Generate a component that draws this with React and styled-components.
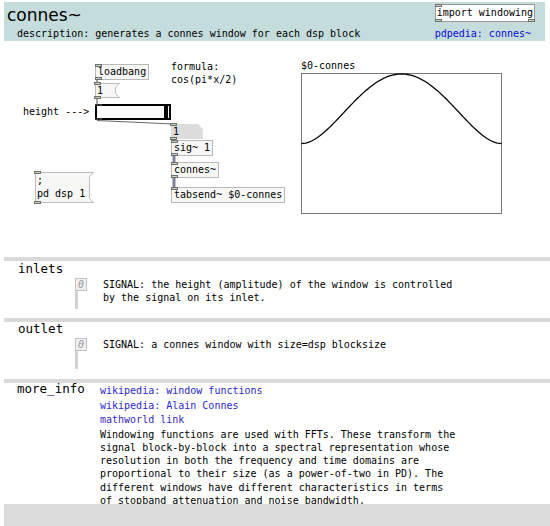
import React from "react";
import styled, { createGlobalStyle } from "styled-components";

const mono = `"DejaVu Sans Mono", "Liberation Mono", monospace`;

const GlobalStyle = createGlobalStyle`
  body {
    margin: 0;
    background: #ffffff;
    font-family: ${mono};
    color: #000;
  }
`;

const Page = styled.div`
  width: 550px;
  height: 526px;
  overflow: hidden;
  padding-top: 2px;
  box-sizing: border-box;
`;

/* ---------- header ---------- */

const Header = styled.header`
  display: flex;
  justify-content: space-between;
  margin: 0 5px 0 4px;
  height: 39px;
  background-color: #c5dcdc;
`;

const HeaderLeft = styled.div`
  display: flex;
  flex-direction: column;
`;

const Title = styled.h1`
  margin: 3px 0 0 3px;
  font-family: "DejaVu Sans", "Liberation Sans", sans-serif;
  font-size: 17px;
  font-weight: normal;
  line-height: 20px;
`;

const Description = styled.div`
  margin: 2px 0 0 13px;
  font-size: 10px;
  line-height: 13px;
`;

const HeaderRight = styled.div`
  display: flex;
  flex-direction: column;
  align-items: flex-start;
  padding: 2px 10px 0 0;
`;

const Link = styled.a`
  font-family: ${mono};
  font-size: 10px;
  line-height: ${(p) => p.$lh || 13}px;
  color: ${(p) => p.$color || "#2a1fd2"};
  text-decoration: none;
`;

const PdLink = styled(Link)`
  margin-top: 5px;
  color: #0b0bd8;
`;

/* ---------- pd boxes ---------- */

const Tab = styled.span`
  position: absolute;
  left: -1px;
  ${(p) => (p.$bottom ? "bottom: -1px;" : "top: -1px;")}
  ${(p) => (p.$right ? "left: auto; right: -1px;" : "")}
  width: 5px;
  height: 1px;
  border: 1px solid #6b7268;
  background: #c8d0c6;
`;

const ObjBox = styled.div`
  position: ${(p) => (p.$inline ? "relative" : "absolute")};
  left: ${(p) => p.$x || 0}px;
  top: ${(p) => p.$y || 0}px;
  height: 14px;
  padding: 0 2px;
  border: 1px solid #b9b9b9;
  background: #f7f7f5;
  font-size: 10px;
  line-height: 14px;
  white-space: nowrap;
`;

const ImportBox = styled(ObjBox)`
  height: 16px;
  padding: 0 1px;
  line-height: 16px;
  background: #ffffff;
  border-color: #9a9a9a;
`;

const MsgBox = styled.div`
  position: absolute;
  left: ${(p) => p.$x}px;
  top: ${(p) => p.$y}px;
  width: ${(p) => p.$w}px;
  height: ${(p) => p.$h}px;
  font-size: 10px;
  line-height: ${(p) => (p.$h > 20 ? 13 : 14)}px;
  white-space: pre;
`;

const MsgText = styled.div`
  position: relative;
  padding: ${(p) => (p.$h > 20 ? "2px" : "1px")} 2px 0;
`;

const NumBox = styled.div`
  position: absolute;
  left: ${(p) => p.$x}px;
  top: ${(p) => p.$y}px;
  width: ${(p) => p.$w}px;
  height: 15px;
  font-size: 10px;
  line-height: 15px;
`;

const NumFill = styled.div`
  position: absolute;
  inset: 0;
  background: #dcdcdc;
  clip-path: polygon(0 0, calc(100% - 5px) 0, 100% 5px, 100% 100%, 0 100%);
`;

const NumText = styled.div`
  position: relative;
  padding-left: 2px;
`;

const Slider = styled.div`
  position: absolute;
  left: ${(p) => p.$x}px;
  top: ${(p) => p.$y}px;
  width: ${(p) => p.$w}px;
  height: 16px;
  box-sizing: border-box;
  border: 2px solid #000;
  background: #fbfbfb;
  display: flex;
  justify-content: flex-end;
`;

const SliderKnob = styled.div`
  width: 4px;
  background: #000;
  margin-right: 1px;
`;

const SliderTab = styled.span`
  position: absolute;
  left: -2px;
  ${(p) => (p.$bottom ? "bottom: -2px;" : "top: -2px;")}
  width: 7px;
  height: 2px;
  background: #333;
`;

const Comment = styled.div`
  position: absolute;
  left: ${(p) => p.$x}px;
  top: ${(p) => p.$y}px;
  font-size: 10px;
  line-height: ${(p) => p.$lh || 14}px;
  white-space: pre;
`;

const Canvas = styled.div`
  position: relative;
  height: 216px;
`;

const Wires = styled.svg`
  position: absolute;
  left: 0;
  top: 0;
  pointer-events: none;
`;

const GraphBox = styled.svg`
  position: absolute;
  left: ${(p) => p.$x}px;
  top: ${(p) => p.$y}px;
`;

/* ---------- sections ---------- */

const SepBar = styled.div`
  height: 4px;
  margin-left: 4px;
  background: #d9d9d9;
`;

const Section = styled.section`
  height: ${(p) => p.$h}px;
  padding-left: ${(p) => p.$pad || 18}px;
  display: flex;
  flex-direction: ${(p) => (p.$row ? "row" : "column")};
`;

const SectionLabel = styled.div`
  font-family: ${mono};
  font-size: 12.5px;
  line-height: 15px;
  margin-top: ${(p) => p.$nudge || 0}px;
  width: ${(p) => (p.$w ? `${p.$w}px` : "auto")};
  flex-shrink: 0;
`;

const IoRow = styled.div`
  display: flex;
  margin: 2px 0 0 57px;
`;

const IoBox = styled.div`
  position: relative;
  width: 10px;
  height: 11px;
  border: 1px solid #c2c2c2;
  background: #f0f0f0;
  color: #9a9a9a;
  font-size: 10px;
  font-style: italic;
  line-height: 11px;
  text-align: center;
  flex-shrink: 0;

  &::after {
    content: "";
    position: absolute;
    left: -1px;
    top: 12px;
    width: 3px;
    height: 18px;
    background: #d2d2d2;
  }
`;

const IoText = styled.div`
  margin-left: 16px;
  font-size: 10px;
  line-height: 13px;
`;

const InfoBody = styled.div`
  display: flex;
  flex-direction: column;
  align-items: flex-start;
  padding-top: 1px;
`;

const Paragraph = styled.p`
  margin: 0;
  width: 358px;
  font-size: 10px;
  line-height: 13.3px;
`;

const Footer = styled.div`
  position: relative;
  height: 24px;
  margin-left: 4px;
  background: #dcdcdc;
`;

function MessageBox({ x, y, w, h, children }) {
  const pts = `0.5,0.5 ${w - 0.5},0.5 ${w - 4.5},4.5 ${w - 4.5},${h - 4.5} ${w - 0.5},${h - 0.5} 0.5,${h - 0.5}`;
  return (
    <MsgBox $x={x} $y={y} $w={w} $h={h}>
      <svg width={w} height={h} style={{ position: "absolute", left: 0, top: 0 }}>
        <polygon points={pts} fill="#f7f7f5" stroke="#bdbdbd" strokeWidth="1" />
      </svg>
      <Tab />
      <Tab $bottom />
      <MsgText $h={h}>{children}</MsgText>
    </MsgBox>
  );
}

function ConnesGraph({ x, y }) {
  const w = 200;
  const h = 140;
  const pts = [];
  for (let i = 0; i <= 100; i++) {
    const u = (i - 50) / 50;
    const v = (1 - u * u) * (1 - u * u);
    pts.push(`${(i * 2 + 0.5).toFixed(1)},${(h / 2 - (h / 2 - 0.5) * v + 0.5).toFixed(2)}`);
  }
  return (
    <GraphBox $x={x} $y={y} width={w + 1} height={h + 1}>
      <rect x="0.5" y="0.5" width={w} height={h} fill="#fff" stroke="#777" />
      <polyline points={pts.join(" ")} fill="none" stroke="#000" strokeWidth="1.3" />
    </GraphBox>
  );
}

export default function App() {
  return (
    <Page>
      <GlobalStyle />
      <Header>
        <HeaderLeft>
          <Title>connes~</Title>
          <Description>
            description: generates a connes window for each dsp block
          </Description>
        </HeaderLeft>
        <HeaderRight>
          <ImportBox $inline>
            <Tab />
            <Tab $bottom />
            <Tab $bottom $right />
            import windowing
          </ImportBox>
          <PdLink href="#">pdpedia: connes~</PdLink>
        </HeaderRight>
      </Header>

      <Canvas>
        <Wires width="550" height="216">
          <line x1="97" y1="39" x2="97" y2="42" stroke="#555" />
          <line x1="97" y1="57" x2="97" y2="63" stroke="#555" />
          <line x1="97" y1="79.5" x2="173" y2="83" stroke="#6a6a6a" strokeWidth="1.2" />
          <line x1="173" y1="98" x2="173" y2="99" stroke="#555" />
          <line x1="174" y1="115" x2="174" y2="121" stroke="#80809a" strokeWidth="3" />
          <line x1="174" y1="137" x2="174" y2="146" stroke="#80809a" strokeWidth="3" />
        </Wires>

        <ObjBox $x={95} $y={23}>
          <Tab />
          <Tab $bottom />
          loadbang
        </ObjBox>
        <MessageBox x={95} y={42} w={25} h={15}>
          1
        </MessageBox>

        <Comment $x={23} $y={64}>height ---&gt;</Comment>
        <Slider $x={95} $y={63} $w={76}>
          <SliderTab />
          <SliderTab $bottom />
          <SliderKnob />
        </Slider>

        <NumBox $x={171} $y={83} $w={32}>
          <NumFill />
          <Tab />
          <Tab $bottom />
          <NumText>1</NumText>
        </NumBox>
        <ObjBox $x={171} $y={99}>
          <Tab />
          <Tab $bottom />
          sig~ 1
        </ObjBox>
        <ObjBox $x={171} $y={121}>
          <Tab />
          <Tab $bottom />
          connes~
        </ObjBox>
        <ObjBox $x={171} $y={146}>
          <Tab />
          tabsend~ $0-connes
        </ObjBox>

        <MessageBox x={35} y={131} w={59} h={31}>
          {";\npd dsp 1"}
        </MessageBox>

        <Comment $x={171} $y={20} $lh={12.5}>
          {"formula:\ncos(pi*x/2)"}
        </Comment>

        <Comment $x={301} $y={18}>$0-connes</Comment>
        <ConnesGraph x={301} y={32} />
      </Canvas>

      <SepBar />
      <Section $h={57}>
        <SectionLabel>inlets</SectionLabel>
        <IoRow>
          <IoBox>0</IoBox>
          <IoText>
            SIGNAL: the height (amplitude) of the window is controlled
            <br />
            by the signal on its inlet.
          </IoText>
        </IoRow>
      </Section>

      <SepBar />
      <Section $h={57}>
        <SectionLabel $nudge={-1}>outlet</SectionLabel>
        <IoRow>
          <IoBox>0</IoBox>
          <IoText>SIGNAL: a connes window with size=dsp blocksize</IoText>
        </IoRow>
      </Section>

      <SepBar />
      <Section $h={121} $row $pad={17}>
        <SectionLabel $w={83} $nudge={-2}>more_info</SectionLabel>
        <InfoBody>
          <Link href="#" $lh={14.5}>wikipedia: window functions</Link>
          <Link href="#" $lh={14.5}>wikipedia: Alain Connes</Link>
          <Link href="#" $lh={14.5} $color="#3a1fc8">mathworld link</Link>
          <Paragraph>
            Windowing functions are used with FFTs. These transform the signal
            block-by-block into a spectral representation whose resolution in
            both the frequency and time domains are proportional to their size
            (as a power-of-two in PD). The different windows have different
            characteristics in terms of stopband attenuation and noise
            bandwidth.
          </Paragraph>
        </InfoBody>
      </Section>
      <Footer />
    </Page>
  );
}
